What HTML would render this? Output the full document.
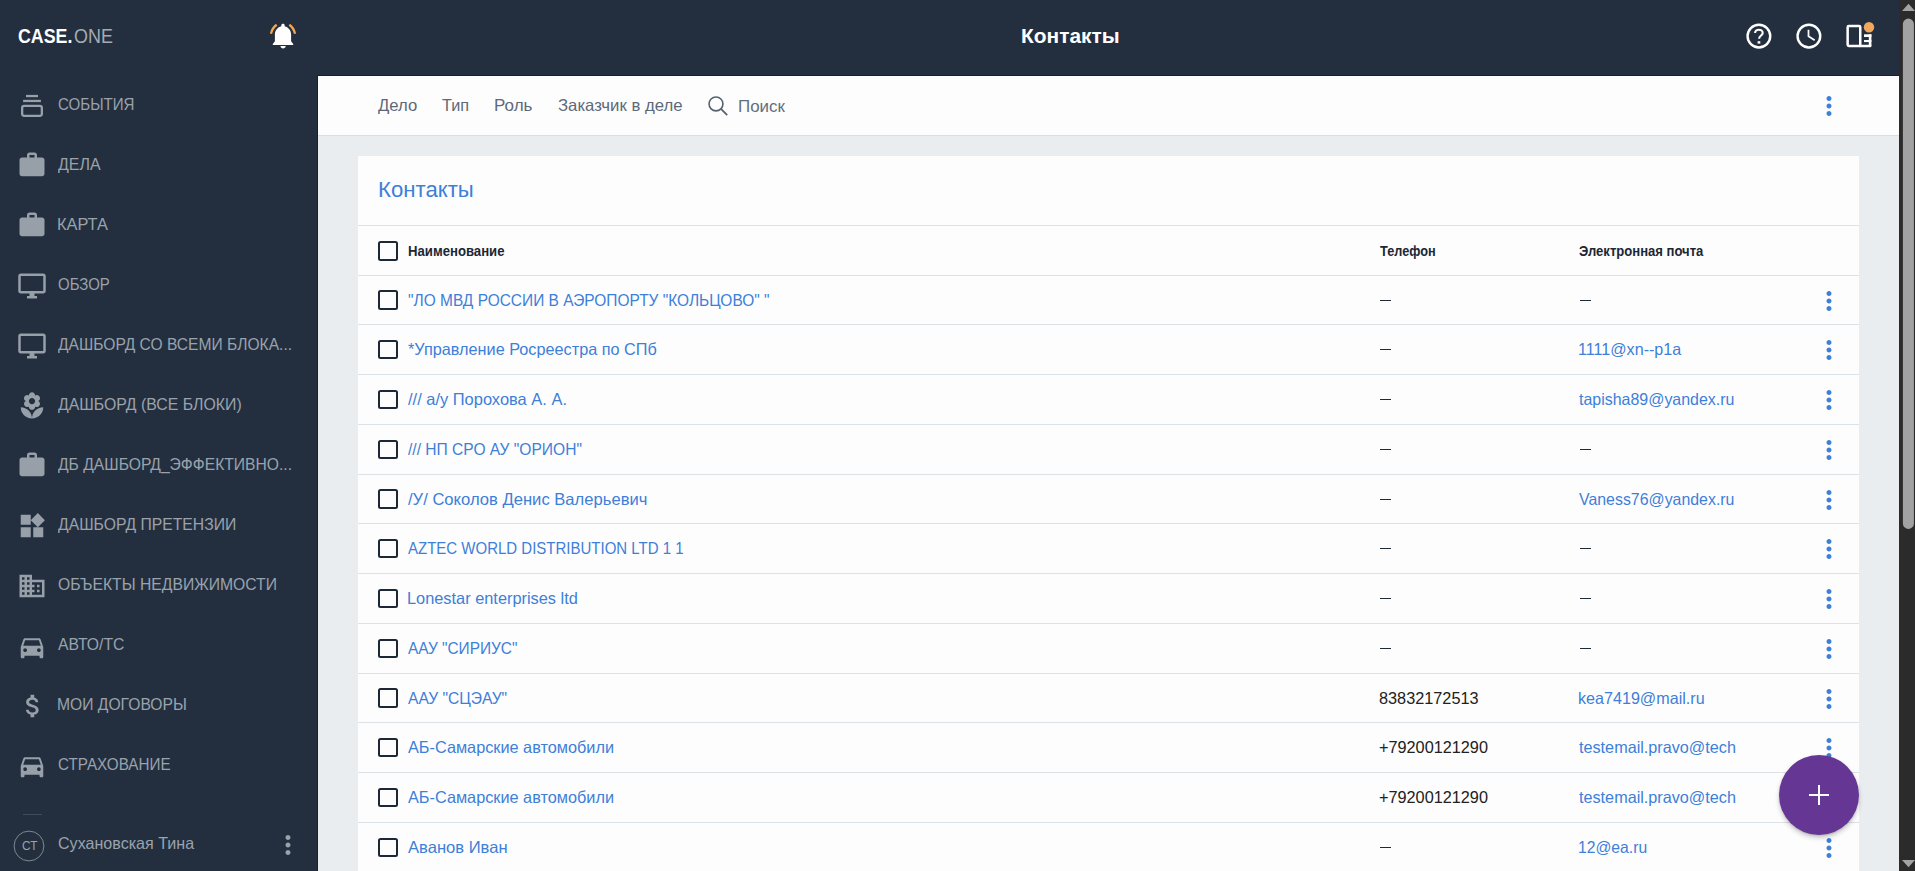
<!DOCTYPE html>
<html><head><meta charset="utf-8">
<style>
*{margin:0;padding:0;box-sizing:border-box}
html,body{width:1915px;height:871px;overflow:hidden;background:#e9edf0;font-family:"Liberation Sans",sans-serif;position:relative}
.abs{position:absolute}
.t{position:absolute;white-space:nowrap;transform-origin:0 0}
#side{position:absolute;left:0;top:0;width:318px;height:871px;background:#232f3f}
#sideline{position:absolute;left:317px;top:75px;width:1px;height:796px;background:#16212f}
#header{position:absolute;left:0;top:0;width:1899px;height:76px;background:#232f3f}
#headline{position:absolute;left:317px;top:75px;width:1582px;height:1px;background:#16212f}
#filter{position:absolute;left:318px;top:76px;width:1581px;height:60px;background:#fdfdfd;border-bottom:1px solid #d9dee2}
#card{position:absolute;left:358px;top:156px;width:1501px;height:720px;background:#fdfdfd}
.hl{position:absolute;left:358px;width:1501px;height:1px;background:#dde2e6}
.cb{position:absolute;left:378px;width:19.8px;height:19.8px;border:2.3px solid #1c2838;border-radius:2.5px}
.dash{position:absolute;width:11px;height:1px;background:#1f2a37}
#scroll{position:absolute;left:1899px;top:0;width:16px;height:871px;background:#2b2b2b}
</style></head>
<body>
<div id="side"></div>
<div id="header"></div>
<div id="sideline"></div>
<div id="headline"></div>
<div id="filter"></div>
<div id="card"></div>
<div class="hl" style="top:225px"></div>
<div class="hl" style="top:275px"></div>
<div class="hl" style="top:324px"></div>
<div class="hl" style="top:374px"></div>
<div class="hl" style="top:424px"></div>
<div class="hl" style="top:474px"></div>
<div class="hl" style="top:523px"></div>
<div class="hl" style="top:573px"></div>
<div class="hl" style="top:623px"></div>
<div class="hl" style="top:673px"></div>
<div class="hl" style="top:722px"></div>
<div class="hl" style="top:772px"></div>
<div class="hl" style="top:822px"></div>
<div class="hl" style="top:872px"></div>
<div class="cb" style="top:241.00px"></div>
<div class="cb" style="top:290.10px"></div>
<svg class="abs" style="left:1814.00px;top:285.60px" width="30" height="30" viewBox="0 0 24 24"><path fill="#3d7fd9" d="M12 8c1.1 0 2-.9 2-2s-.9-2-2-2-2 .9-2 2 .9 2 2 2zm0 2c-1.1 0-2 .9-2 2s.9 2 2 2 2-.9 2-2-.9-2-2-2zm0 6c-1.1 0-2 .9-2 2s.9 2 2 2 2-.9 2-2-.9-2-2-2z"/></svg>
<div class="dash" style="left:1380px;top:300px"></div>
<div class="dash" style="left:1580px;top:300px"></div>
<div class="cb" style="top:339.60px"></div>
<svg class="abs" style="left:1814.00px;top:335.10px" width="30" height="30" viewBox="0 0 24 24"><path fill="#3d7fd9" d="M12 8c1.1 0 2-.9 2-2s-.9-2-2-2-2 .9-2 2 .9 2 2 2zm0 2c-1.1 0-2 .9-2 2s.9 2 2 2 2-.9 2-2-.9-2-2-2zm0 6c-1.1 0-2 .9-2 2s.9 2 2 2 2-.9 2-2-.9-2-2-2z"/></svg>
<div class="dash" style="left:1380px;top:349px"></div>
<div class="cb" style="top:389.60px"></div>
<svg class="abs" style="left:1814.00px;top:385.10px" width="30" height="30" viewBox="0 0 24 24"><path fill="#3d7fd9" d="M12 8c1.1 0 2-.9 2-2s-.9-2-2-2-2 .9-2 2 .9 2 2 2zm0 2c-1.1 0-2 .9-2 2s.9 2 2 2 2-.9 2-2-.9-2-2-2zm0 6c-1.1 0-2 .9-2 2s.9 2 2 2 2-.9 2-2-.9-2-2-2z"/></svg>
<div class="dash" style="left:1380px;top:399px"></div>
<div class="cb" style="top:439.60px"></div>
<svg class="abs" style="left:1814.00px;top:435.10px" width="30" height="30" viewBox="0 0 24 24"><path fill="#3d7fd9" d="M12 8c1.1 0 2-.9 2-2s-.9-2-2-2-2 .9-2 2 .9 2 2 2zm0 2c-1.1 0-2 .9-2 2s.9 2 2 2 2-.9 2-2-.9-2-2-2zm0 6c-1.1 0-2 .9-2 2s.9 2 2 2 2-.9 2-2-.9-2-2-2z"/></svg>
<div class="dash" style="left:1380px;top:449px"></div>
<div class="dash" style="left:1580px;top:449px"></div>
<div class="cb" style="top:489.10px"></div>
<svg class="abs" style="left:1814.00px;top:484.60px" width="30" height="30" viewBox="0 0 24 24"><path fill="#3d7fd9" d="M12 8c1.1 0 2-.9 2-2s-.9-2-2-2-2 .9-2 2 .9 2 2 2zm0 2c-1.1 0-2 .9-2 2s.9 2 2 2 2-.9 2-2-.9-2-2-2zm0 6c-1.1 0-2 .9-2 2s.9 2 2 2 2-.9 2-2-.9-2-2-2z"/></svg>
<div class="dash" style="left:1380px;top:499px"></div>
<div class="cb" style="top:538.60px"></div>
<svg class="abs" style="left:1814.00px;top:534.10px" width="30" height="30" viewBox="0 0 24 24"><path fill="#3d7fd9" d="M12 8c1.1 0 2-.9 2-2s-.9-2-2-2-2 .9-2 2 .9 2 2 2zm0 2c-1.1 0-2 .9-2 2s.9 2 2 2 2-.9 2-2-.9-2-2-2zm0 6c-1.1 0-2 .9-2 2s.9 2 2 2 2-.9 2-2-.9-2-2-2z"/></svg>
<div class="dash" style="left:1380px;top:548px"></div>
<div class="dash" style="left:1580px;top:548px"></div>
<div class="cb" style="top:588.60px"></div>
<svg class="abs" style="left:1814.00px;top:584.10px" width="30" height="30" viewBox="0 0 24 24"><path fill="#3d7fd9" d="M12 8c1.1 0 2-.9 2-2s-.9-2-2-2-2 .9-2 2 .9 2 2 2zm0 2c-1.1 0-2 .9-2 2s.9 2 2 2 2-.9 2-2-.9-2-2-2zm0 6c-1.1 0-2 .9-2 2s.9 2 2 2 2-.9 2-2-.9-2-2-2z"/></svg>
<div class="dash" style="left:1380px;top:598px"></div>
<div class="dash" style="left:1580px;top:598px"></div>
<div class="cb" style="top:638.60px"></div>
<svg class="abs" style="left:1814.00px;top:634.10px" width="30" height="30" viewBox="0 0 24 24"><path fill="#3d7fd9" d="M12 8c1.1 0 2-.9 2-2s-.9-2-2-2-2 .9-2 2 .9 2 2 2zm0 2c-1.1 0-2 .9-2 2s.9 2 2 2 2-.9 2-2-.9-2-2-2zm0 6c-1.1 0-2 .9-2 2s.9 2 2 2 2-.9 2-2-.9-2-2-2z"/></svg>
<div class="dash" style="left:1380px;top:648px"></div>
<div class="dash" style="left:1580px;top:648px"></div>
<div class="cb" style="top:688.10px"></div>
<svg class="abs" style="left:1814.00px;top:683.60px" width="30" height="30" viewBox="0 0 24 24"><path fill="#3d7fd9" d="M12 8c1.1 0 2-.9 2-2s-.9-2-2-2-2 .9-2 2 .9 2 2 2zm0 2c-1.1 0-2 .9-2 2s.9 2 2 2 2-.9 2-2-.9-2-2-2zm0 6c-1.1 0-2 .9-2 2s.9 2 2 2 2-.9 2-2-.9-2-2-2z"/></svg>
<div class="cb" style="top:737.60px"></div>
<svg class="abs" style="left:1814.00px;top:733.10px" width="30" height="30" viewBox="0 0 24 24"><path fill="#3d7fd9" d="M12 8c1.1 0 2-.9 2-2s-.9-2-2-2-2 .9-2 2 .9 2 2 2zm0 2c-1.1 0-2 .9-2 2s.9 2 2 2 2-.9 2-2-.9-2-2-2zm0 6c-1.1 0-2 .9-2 2s.9 2 2 2 2-.9 2-2-.9-2-2-2z"/></svg>
<div class="cb" style="top:787.60px"></div>
<svg class="abs" style="left:1814.00px;top:783.10px" width="30" height="30" viewBox="0 0 24 24"><path fill="#3d7fd9" d="M12 8c1.1 0 2-.9 2-2s-.9-2-2-2-2 .9-2 2 .9 2 2 2zm0 2c-1.1 0-2 .9-2 2s.9 2 2 2 2-.9 2-2-.9-2-2-2zm0 6c-1.1 0-2 .9-2 2s.9 2 2 2 2-.9 2-2-.9-2-2-2z"/></svg>
<div class="cb" style="top:837.60px"></div>
<svg class="abs" style="left:1814.00px;top:833.10px" width="30" height="30" viewBox="0 0 24 24"><path fill="#3d7fd9" d="M12 8c1.1 0 2-.9 2-2s-.9-2-2-2-2 .9-2 2 .9 2 2 2zm0 2c-1.1 0-2 .9-2 2s.9 2 2 2 2-.9 2-2-.9-2-2-2zm0 6c-1.1 0-2 .9-2 2s.9 2 2 2 2-.9 2-2-.9-2-2-2z"/></svg>
<div class="dash" style="left:1380px;top:847px"></div>
<svg class="abs" style="left:0;top:0" width="60" height="130"><g fill="#979fa9"><rect x="26" y="94.9" width="12" height="2.3"/><rect x="23.1" y="99.8" width="17.8" height="2.3"/></g><rect x="22.15" y="105.95" width="19.7" height="9.9" rx="2" fill="none" stroke="#979fa9" stroke-width="2.3"/></svg>
<svg class="abs" style="left:17px;top:149.5px" width="30" height="30" viewBox="0 0 24 24"><path fill="#979fa9" d="M20 6h-4V4c0-1.11-.89-2-2-2h-4c-1.11 0-2 .89-2 2v2H4c-1.11 0-1.99.89-1.99 2L2 19c0 1.11.89 2 2 2h16c1.11 0 2-.89 2-2V8c0-1.11-.89-2-2-2zm-6 0h-4V4h4v2z"/></svg>
<svg class="abs" style="left:17px;top:209.5px" width="30" height="30" viewBox="0 0 24 24"><path fill="#979fa9" d="M20 6h-4V4c0-1.11-.89-2-2-2h-4c-1.11 0-2 .89-2 2v2H4c-1.11 0-1.99.89-1.99 2L2 19c0 1.11.89 2 2 2h16c1.11 0 2-.89 2-2V8c0-1.11-.89-2-2-2zm-6 0h-4V4h4v2z"/></svg>
<svg class="abs" style="left:17px;top:271px" width="30" height="30" viewBox="0 0 24 24"><path fill="#979fa9" d="M21 2H3c-1.1 0-2 .9-2 2v12c0 1.1.9 2 2 2h7v2H8v2h8v-2h-2v-2h7c1.1 0 2-.9 2-2V4c0-1.1-.9-2-2-2zm0 14H3V4h18v12z"/></svg>
<svg class="abs" style="left:17px;top:331px" width="30" height="30" viewBox="0 0 24 24"><path fill="#979fa9" d="M21 2H3c-1.1 0-2 .9-2 2v12c0 1.1.9 2 2 2h7v2H8v2h8v-2h-2v-2h7c1.1 0 2-.9 2-2V4c0-1.1-.9-2-2-2zm0 14H3V4h18v12z"/></svg>
<svg class="abs" style="left:17px;top:390.5px" width="30" height="30" viewBox="0 0 24 24"><path fill="#979fa9" d="M12 22c4.97 0 9-4.03 9-9-4.97 0-9 4.03-9 9zM5.6 10.25c0 1.38 1.12 2.5 2.5 2.5.53 0 1.01-.16 1.42-.44l-.02.19c0 1.38 1.12 2.5 2.5 2.5s2.5-1.12 2.5-2.5l-.02-.19c.4.28.89.44 1.42.44 1.38 0 2.5-1.12 2.5-2.5 0-1-.59-1.85-1.43-2.25.84-.4 1.43-1.25 1.43-2.25 0-1.38-1.12-2.5-2.5-2.5-.53 0-1.01.16-1.42.44l.02-.19C14.5 2.12 13.38 1 12 1S9.5 2.12 9.5 3.5l.02.19c-.4-.28-.89-.44-1.42-.44-1.38 0-2.5 1.12-2.5 2.5 0 1 .59 1.85 1.43 2.25-.84.4-1.43 1.25-1.43 2.25zM12 5.5c1.38 0 2.5 1.12 2.5 2.5s-1.12 2.5-2.5 2.5S9.5 9.38 9.5 8s1.12-2.5 2.5-2.5zM3 13c0 4.97 4.03 9 9 9 0-4.97-4.03-9-9-9z"/></svg>
<svg class="abs" style="left:17px;top:449.5px" width="30" height="30" viewBox="0 0 24 24"><path fill="#979fa9" d="M20 6h-4V4c0-1.11-.89-2-2-2h-4c-1.11 0-2 .89-2 2v2H4c-1.11 0-1.99.89-1.99 2L2 19c0 1.11.89 2 2 2h16c1.11 0 2-.89 2-2V8c0-1.11-.89-2-2-2zm-6 0h-4V4h4v2z"/></svg>
<svg class="abs" style="left:17px;top:510.75px" width="30" height="30" viewBox="0 0 24 24"><path fill="#979fa9" d="M13 13v8h8v-8h-8zM3 21h8v-8H3v8zM3 3v8h8V3H3zm13.66-1.31L11 7.34 16.66 13l5.66-5.66-5.66-5.65z"/></svg>
<svg class="abs" style="left:17px;top:571px" width="30" height="30" viewBox="0 0 24 24"><path fill="#979fa9" d="M12 7V3H2v18h20V7H12zM6 19H4v-2h2v2zm0-4H4v-2h2v2zm0-4H4V9h2v2zm0-4H4V5h2v2zm4 12H8v-2h2v2zm0-4H8v-2h2v2zm0-4H8V9h2v2zm0-4H8V5h2v2zm10 12h-8v-2h2v-2h-2v-2h2v-2h-2V9h8v10zm-2-8h-2v2h2v-2zm0 4h-2v2h2v-2z"/></svg>
<svg class="abs" style="left:17px;top:631.5px" width="30" height="30" viewBox="0 0 24 24"><path fill="#979fa9" d="M18.92 6.01C18.72 5.42 18.16 5 17.5 5h-11c-.66 0-1.21.42-1.42 1.01L3 12v8c0 .55.45 1 1 1h1c.55 0 1-.45 1-1v-1h12v1c0 .55.45 1 1 1h1c.55 0 1-.45 1-1v-8l-2.08-5.99zM6.5 16c-.83 0-1.5-.67-1.5-1.5S5.67 13 6.5 13s1.5.67 1.5 1.5S7.33 16 6.5 16zm11 0c-.83 0-1.5-.67-1.5-1.5s.67-1.5 1.5-1.5 1.5.67 1.5 1.5-.67 1.5-1.5 1.5zM5 11l1.5-4.5h11L19 11H5z"/></svg>
<svg class="abs" style="left:17.5px;top:691px" width="30" height="30" viewBox="0 0 24 24"><path fill="#979fa9" d="M11.8 10.9c-2.27-.59-3-1.2-3-2.15 0-1.09 1.01-1.85 2.7-1.85 1.78 0 2.44.85 2.5 2.1h2.21c-.07-1.72-1.12-3.3-3.21-3.81V3h-3v2.16c-1.94.42-3.5 1.68-3.5 3.61 0 2.31 1.91 3.46 4.7 4.13 2.5.6 3 1.48 3 2.41 0 .69-.49 1.79-2.7 1.79-2.06 0-2.87-.92-2.98-2.1h-2.2c.12 2.19 1.76 3.42 3.68 3.83V21h3v-2.15c1.95-.37 3.5-1.5 3.5-3.55 0-2.84-2.43-3.81-4.7-4.4z"/></svg>
<svg class="abs" style="left:17px;top:751.3px" width="30" height="30" viewBox="0 0 24 24"><path fill="#979fa9" d="M18.92 6.01C18.72 5.42 18.16 5 17.5 5h-11c-.66 0-1.21.42-1.42 1.01L3 12v8c0 .55.45 1 1 1h1c.55 0 1-.45 1-1v-1h12v1c0 .55.45 1 1 1h1c.55 0 1-.45 1-1v-8l-2.08-5.99zM6.5 16c-.83 0-1.5-.67-1.5-1.5S5.67 13 6.5 13s1.5.67 1.5 1.5S7.33 16 6.5 16zm11 0c-.83 0-1.5-.67-1.5-1.5s.67-1.5 1.5-1.5 1.5.67 1.5 1.5-.67 1.5-1.5 1.5zM5 11l1.5-4.5h11L19 11H5z"/></svg>
<div class="t" style="left:58.00px;top:95.76px;font-size:16.48px;line-height:16.48px;font-weight:400;color:#9aa2ac;transform:scaleX(0.9162)">СОБЫТИЯ</div>
<div class="t" style="left:58.00px;top:155.76px;font-size:16.48px;line-height:16.48px;font-weight:400;color:#9aa2ac;transform:scaleX(0.9694)">ДЕЛА</div>
<div class="t" style="left:57.01px;top:215.76px;font-size:16.48px;line-height:16.48px;font-weight:400;color:#9aa2ac;transform:scaleX(0.9934)">КАРТА</div>
<div class="t" style="left:58.00px;top:275.76px;font-size:16.48px;line-height:16.48px;font-weight:400;color:#9aa2ac;transform:scaleX(0.9087)">ОБЗОР</div>
<div class="t" style="left:58.00px;top:335.76px;font-size:16.48px;line-height:16.48px;font-weight:400;color:#9aa2ac;transform:scaleX(0.9461)">ДАШБОРД СО ВСЕМИ БЛОКА...</div>
<div class="t" style="left:58.00px;top:395.76px;font-size:16.48px;line-height:16.48px;font-weight:400;color:#9aa2ac;transform:scaleX(0.9617)">ДАШБОРД (ВСЕ БЛОКИ)</div>
<div class="t" style="left:58.00px;top:455.76px;font-size:16.48px;line-height:16.48px;font-weight:400;color:#9aa2ac;transform:scaleX(0.9508)">ДБ ДАШБОРД_ЭФФЕКТИВНО...</div>
<div class="t" style="left:58.00px;top:515.76px;font-size:16.48px;line-height:16.48px;font-weight:400;color:#9aa2ac;transform:scaleX(0.9553)">ДАШБОРД ПРЕТЕНЗИИ</div>
<div class="t" style="left:58.00px;top:575.76px;font-size:16.48px;line-height:16.48px;font-weight:400;color:#9aa2ac;transform:scaleX(0.9540)">ОБЪЕКТЫ НЕДВИЖИМОСТИ</div>
<div class="t" style="left:58.00px;top:635.76px;font-size:16.48px;line-height:16.48px;font-weight:400;color:#9aa2ac;transform:scaleX(0.9550)">АВТО/ТС</div>
<div class="t" style="left:57.05px;top:695.76px;font-size:16.48px;line-height:16.48px;font-weight:400;color:#9aa2ac;transform:scaleX(0.9508)">МОИ ДОГОВОРЫ</div>
<div class="t" style="left:58.00px;top:755.76px;font-size:16.48px;line-height:16.48px;font-weight:400;color:#9aa2ac;transform:scaleX(0.9254)">СТРАХОВАНИЕ</div>
<div class="t" style="left:58.10px;top:835.16px;font-size:16.48px;line-height:16.48px;font-weight:400;color:#9aa2ac;transform:scaleX(0.9769)">Сухановская Тина</div>
<div class="t" style="left:21.80px;top:839.10px;font-size:13.00px;line-height:13.00px;font-weight:400;color:#9aa2ac;transform:scaleX(0.9141)">СТ</div>
<div class="t" style="left:18.10px;top:25.70px;font-size:20.60px;line-height:20.60px;font-weight:700;color:#ffffff;transform:scaleX(0.8631)">CASE.</div>
<div class="t" style="left:74.10px;top:25.70px;font-size:20.60px;line-height:20.60px;font-weight:400;color:#a3abb3;transform:scaleX(0.8703)">ONE</div>
<div class="t" style="left:1021.48px;top:26.30px;font-size:20.60px;line-height:20.60px;font-weight:700;color:#ffffff;transform:scaleX(1.0155)">Контакты</div>
<div class="t" style="left:377.70px;top:96.96px;font-size:16.48px;line-height:16.48px;font-weight:400;color:#5d6978;transform:scaleX(1.0114)">Дело</div>
<div class="t" style="left:442.40px;top:96.96px;font-size:16.48px;line-height:16.48px;font-weight:400;color:#5d6978;transform:scaleX(0.9836)">Тип</div>
<div class="t" style="left:494.07px;top:96.96px;font-size:16.48px;line-height:16.48px;font-weight:400;color:#5d6978;transform:scaleX(1.0318)">Роль</div>
<div class="t" style="left:557.50px;top:96.96px;font-size:16.48px;line-height:16.48px;font-weight:400;color:#5d6978;transform:scaleX(1.0166)">Заказчик в деле</div>
<div class="t" style="left:738.37px;top:97.76px;font-size:16.48px;line-height:16.48px;font-weight:400;color:#636e7b;transform:scaleX(1.0258)">Поиск</div>
<div class="t" style="left:378.22px;top:178.69px;font-size:21.63px;line-height:21.63px;font-weight:400;color:#3d7fd9;transform:scaleX(1.0254)">Контакты</div>
<div class="t" style="left:408.40px;top:243.79px;font-size:14.42px;line-height:14.42px;font-weight:700;color:#1b2735;transform:scaleX(0.9132)">Наименование</div>
<div class="t" style="left:1379.50px;top:243.79px;font-size:14.42px;line-height:14.42px;font-weight:700;color:#1b2735;transform:scaleX(0.8831)">Телефон</div>
<div class="t" style="left:1578.80px;top:243.79px;font-size:14.42px;line-height:14.42px;font-weight:700;color:#1b2735;transform:scaleX(0.9065)">Электронная почта</div>
<div class="t" style="left:408.10px;top:291.76px;font-size:16.48px;line-height:16.48px;font-weight:400;color:#3d7fd9;transform:scaleX(0.9399)">&quot;ЛО МВД РОССИИ В АЭРОПОРТУ &quot;КОЛЬЦОВО&quot; &quot;</div>
<div class="t" style="left:408.10px;top:341.26px;font-size:16.48px;line-height:16.48px;font-weight:400;color:#3d7fd9;transform:scaleX(0.9868)">*Управление Росреестра по СПб</div>
<div class="t" style="left:1577.92px;top:341.26px;font-size:16.48px;line-height:16.48px;font-weight:400;color:#3d7fd9;transform:scaleX(0.9785)">1111@xn--p1a</div>
<div class="t" style="left:408.10px;top:391.26px;font-size:16.48px;line-height:16.48px;font-weight:400;color:#3d7fd9;transform:scaleX(0.9987)">/// а/у Порохова А. А.</div>
<div class="t" style="left:1578.90px;top:391.26px;font-size:16.48px;line-height:16.48px;font-weight:400;color:#3d7fd9;transform:scaleX(0.9688)">tapisha89@yandex.ru</div>
<div class="t" style="left:408.10px;top:441.26px;font-size:16.48px;line-height:16.48px;font-weight:400;color:#3d7fd9;transform:scaleX(0.9463)">/// НП СРО АУ &quot;ОРИОН&quot;</div>
<div class="t" style="left:408.10px;top:490.76px;font-size:16.48px;line-height:16.48px;font-weight:400;color:#3d7fd9;transform:scaleX(1.0081)">/У/ Соколов Денис Валерьевич</div>
<div class="t" style="left:1578.90px;top:490.76px;font-size:16.48px;line-height:16.48px;font-weight:400;color:#3d7fd9;transform:scaleX(0.9651)">Vaness76@yandex.ru</div>
<div class="t" style="left:408.10px;top:540.26px;font-size:16.48px;line-height:16.48px;font-weight:400;color:#3d7fd9;transform:scaleX(0.9107)">AZTEC WORLD DISTRIBUTION LTD 1 1</div>
<div class="t" style="left:407.11px;top:590.26px;font-size:16.48px;line-height:16.48px;font-weight:400;color:#3d7fd9;transform:scaleX(0.9927)">Lonestar enterprises ltd</div>
<div class="t" style="left:408.10px;top:640.26px;font-size:16.48px;line-height:16.48px;font-weight:400;color:#3d7fd9;transform:scaleX(0.9365)">ААУ &quot;СИРИУС&quot;</div>
<div class="t" style="left:408.10px;top:689.76px;font-size:16.48px;line-height:16.48px;font-weight:400;color:#3d7fd9;transform:scaleX(0.9479)">ААУ &quot;СЦЭАУ&quot;</div>
<div class="t" style="left:1378.70px;top:689.76px;font-size:16.48px;line-height:16.48px;font-weight:400;color:#212121;transform:scaleX(0.9882)">83832172513</div>
<div class="t" style="left:1577.92px;top:689.76px;font-size:16.48px;line-height:16.48px;font-weight:400;color:#3d7fd9;transform:scaleX(0.9792)">kea7419@mail.ru</div>
<div class="t" style="left:408.10px;top:739.26px;font-size:16.48px;line-height:16.48px;font-weight:400;color:#3d7fd9;transform:scaleX(0.9879)">АБ-Самарские автомобили</div>
<div class="t" style="left:1378.70px;top:739.26px;font-size:16.48px;line-height:16.48px;font-weight:400;color:#212121;transform:scaleX(0.9872)">+79200121290</div>
<div class="t" style="left:1578.90px;top:739.26px;font-size:16.48px;line-height:16.48px;font-weight:400;color:#3d7fd9;transform:scaleX(0.9839)">testemail.pravo@tech</div>
<div class="t" style="left:408.10px;top:789.26px;font-size:16.48px;line-height:16.48px;font-weight:400;color:#3d7fd9;transform:scaleX(0.9879)">АБ-Самарские автомобили</div>
<div class="t" style="left:1378.70px;top:789.26px;font-size:16.48px;line-height:16.48px;font-weight:400;color:#212121;transform:scaleX(0.9872)">+79200121290</div>
<div class="t" style="left:1578.90px;top:789.26px;font-size:16.48px;line-height:16.48px;font-weight:400;color:#3d7fd9;transform:scaleX(0.9839)">testemail.pravo@tech</div>
<div class="t" style="left:408.10px;top:839.26px;font-size:16.48px;line-height:16.48px;font-weight:400;color:#3d7fd9;transform:scaleX(1.0067)">Аванов Иван</div>
<div class="t" style="left:1577.95px;top:839.26px;font-size:16.48px;line-height:16.48px;font-weight:400;color:#3d7fd9;transform:scaleX(0.9522)">12@ea.ru</div>
<!-- bell -->
<svg class="abs" style="left:265px;top:18px" width="36" height="36" viewBox="0 0 36 36">
 <path fill="#fff" d="M18 5.8c-1 0-1.7.7-1.7 1.6v.9c-3.6.9-6.4 4.1-6.4 8.1v6.8l-2.1 2.8v.9h20.4v-.9l-2.1-2.8v-6.8c0-4-2.8-7.2-6.4-8.1v-.9c0-.9-.7-1.6-1.7-1.6z"/>
 <path fill="#fff" d="M15.5 28.1h5.2c0 1.4-1.2 2.5-2.6 2.5s-2.6-1.1-2.6-2.5z"/>
 <path fill="none" stroke="#f5a54a" stroke-width="2.3" d="M5.9 15.7c.9-3.5 2.9-6.9 5.8-8.9M30.1 15.7c-.9-3.5-2.9-6.9-5.8-8.9"/>
</svg>
<!-- header right icons -->
<svg class="abs" style="left:1740px;top:15px" width="140" height="45" viewBox="1740 15 140 45">
 <circle cx="1758.9" cy="36.1" r="11.35" fill="none" stroke="#fff" stroke-width="2.4"/>
 <path fill="none" stroke="#fff" stroke-width="2.1" d="M1755.1 33.1c0-2 1.7-3.4 3.8-3.4s3.8 1.4 3.8 3.3c0 2.5-3.6 2.7-3.6 5.8"/>
 <rect x="1757.6" y="41.2" width="2.7" height="2.4" fill="#fff"/>
 <circle cx="1808.9" cy="36.1" r="11.35" fill="none" stroke="#fff" stroke-width="2.4"/>
 <path fill="none" stroke="#fff" stroke-width="1.75" d="M1808.5 29.8v6.5l6.2 4"/>
 <rect x="1847.65" y="26.05" width="12.6" height="20" rx="1.2" fill="none" stroke="#fff" stroke-width="2.5"/>
 <path fill="#fff" d="M1859 44.8h12.4v1.3a1.2 1.2 0 0 1 -1.2 1.2h-11.2z"/>
 <rect x="1868.8" y="34.3" width="2.6" height="12" fill="#fff"/>
 <rect x="1864" y="34.3" width="7.4" height="2.7" fill="#fff"/>
 <rect x="1864" y="40" width="7.4" height="2.1" fill="#fff"/>
 <circle cx="1869" cy="27.2" r="5.2" fill="#f2a85c"/>
</svg>
<!-- search icon -->
<svg class="abs" style="left:700px;top:88px" width="40" height="40" viewBox="700 88 40 40">
 <circle cx="716" cy="103.9" r="6.95" fill="none" stroke="#56626f" stroke-width="1.6"/>
 <path d="M721 108.9l6.2 6.2" stroke="#56626f" stroke-width="1.8"/>
</svg>
<!-- filter kebab -->
<svg class="abs" style="left:1814px;top:91px" width="30" height="30" viewBox="0 0 24 24"><path fill="#3d7fd9" d="M12 8c1.1 0 2-.9 2-2s-.9-2-2-2-2 .9-2 2 .9 2 2 2zm0 2c-1.1 0-2 .9-2 2s.9 2 2 2 2-.9 2-2-.9-2-2-2zm0 6c-1.1 0-2 .9-2 2s.9 2 2 2 2-.9 2-2-.9-2-2-2z"/></svg>
<!-- sidebar divider -->
<div class="abs" style="left:23px;top:814px;width:18.5px;height:1px;background:#3f4b59"></div>
<!-- avatar -->
<svg class="abs" style="left:0;top:820px" width="60" height="51" viewBox="0 820 60 51">
 <circle cx="29" cy="846" r="14.9" fill="none" stroke="#7f8891" stroke-width="1"/>
</svg>
<!-- user kebab -->
<svg class="abs" style="left:272.8px;top:830px" width="30" height="30" viewBox="0 0 24 24"><path fill="#9aa2ac" d="M12 8c1.1 0 2-.9 2-2s-.9-2-2-2-2 .9-2 2 .9 2 2 2zm0 2c-1.1 0-2 .9-2 2s.9 2 2 2 2-.9 2-2-.9-2-2-2zm0 6c-1.1 0-2 .9-2 2s.9 2 2 2 2-.9 2-2-.9-2-2-2z"/></svg>
<!-- FAB -->
<div class="abs" style="left:1779px;top:754.8px;width:80px;height:80px;border-radius:50%;background:#663695;box-shadow:0 3px 5px rgba(0,0,0,.2),0 1px 2px rgba(0,0,0,.12)"></div>
<div class="abs" style="left:1809px;top:793.55px;width:20px;height:2.5px;background:#fff"></div>
<div class="abs" style="left:1817.75px;top:784.8px;width:2.5px;height:20px;background:#fff"></div>
<!-- scrollbar -->
<div id="scroll"></div>
<svg class="abs" style="left:1899px;top:0" width="16" height="871" viewBox="0 0 16 871">
 <path fill="#a3a3a3" d="M3 11h13l-6.5-7.2z"/>
 <path fill="#a2a2a2" d="M3.9 24.1a5.5 5.5 0 0 1 11 0V523.4a5.5 5.5 0 0 1 -11 0z"/>
 <path fill="#a3a3a3" d="M3 860h13l-6.5 7.2z"/>
</svg>
</body></html>
